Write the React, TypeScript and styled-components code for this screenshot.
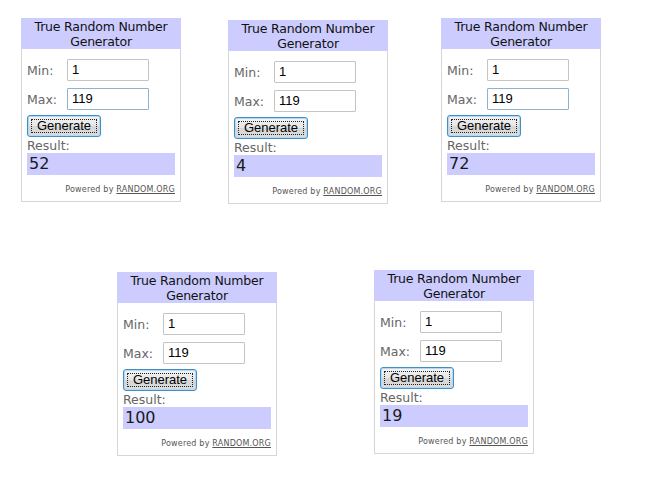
import React from "react";
import styled, { createGlobalStyle } from "styled-components";

const Global = createGlobalStyle`
  html, body { margin: 0; padding: 0; background: #ffffff; }
  body { width: 654px; height: 498px; overflow: hidden; font-family: "DejaVu Sans", Verdana, sans-serif; }
`;

const Page = styled.div`
  display: flex;
  flex-direction: column;
  padding: 18px 0 0 0;
`;

const Row = styled.div<{ $left: number; $top: number }>`
  display: flex;
  align-items: flex-start;
  padding-left: ${(p) => p.$left}px;
  margin-top: ${(p) => p.$top}px;
`;

const Widget = styled.div<{ $ml: number; $mt: number }>`
  box-sizing: border-box;
  width: 160px;
  height: 184px;
  margin-left: ${(p) => p.$ml}px;
  margin-top: ${(p) => p.$mt}px;
  border: 1px solid #d6d6d6;
  border-top: 0;
  display: flex;
  flex-direction: column;
  background: #fff;
`;

const Header = styled.div`
  margin: 0 -1px;
  height: 31px;
  background: #ccccff;
  color: #111;
  font-family: "DejaVu Sans", Verdana, sans-serif;
  font-size: 12.5px;
  line-height: 14.5px;
  text-align: center;
  padding-top: 2px;
  box-sizing: border-box;
  letter-spacing: -0.2px;
`;

const Body = styled.div`
  padding: 10px 0 0 5px;
  display: flex;
  flex-direction: column;
`;

const FieldRow = styled.div`
  display: flex;
  align-items: center;
  height: 22px;
  margin-bottom: 7px;
`;

const Label = styled.span`
  width: 40px;
  color: #666;
  font-size: 12.5px;
  font-family: "DejaVu Sans", Verdana, sans-serif;
`;

const Input = styled.div<{ $focus?: boolean }>`
  box-sizing: border-box;
  width: 82px;
  height: 22px;
  border: 1px solid ${(p) => (p.$focus ? "#8fb3cf" : "#c4c4c4")};
  border-radius: 1px;
  font-family: "Liberation Sans", Arial, sans-serif;
  font-size: 13px;
  line-height: 20px;
  padding-left: 4px;
  color: #000;
  background: #fff;
`;

const Button = styled.div`
  box-sizing: border-box;
  width: 74px;
  height: 22px;
  margin-top: -2px;
  border: 1px solid #3c8fc9;
  border-radius: 3px;
  background: linear-gradient(#f4f4f4, #e6e6e6 50%, #d6d6d6 51%, #dcdcdc);
  box-shadow: inset 0 0 0 1px #b7d8ef;
  font-family: "Liberation Sans", Arial, sans-serif;
  font-size: 13px;
  line-height: 20px;
  text-align: center;
  color: #000;
  position: relative;
  &::after {
    content: "";
    position: absolute;
    inset: 3px;
    border: 1px dotted #222;
  }
`;

const ResultLabel = styled.div`
  color: #666;
  font-size: 12.5px;
  margin-top: 2px;
  line-height: 14px;
`;

const ResultBox = styled.div`
  width: 148px;
  height: 22px;
  background: #ccccff;
  color: #1a1a1a;
  font-family: "DejaVu Sans", Verdana, sans-serif;
  font-size: 16px;
  line-height: 22px;
  padding-left: 2px;
  box-sizing: border-box;
`;

const Powered = styled.div`
  margin-top: 10px;
  width: 148px;
  text-align: right;
  font-size: 8px;
  color: #555;
  font-family: "DejaVu Sans", Verdana, sans-serif;
  letter-spacing: 0.2px;
  & u { color: #555; }
`;

type W = { result: string; ml: number; mt: number; focus?: boolean };

const Generator = ({ result, ml, mt, focus }: W) => (
  <Widget $ml={ml} $mt={mt}>
    <Header>
      True Random Number
      <br />
      Generator
    </Header>
    <Body>
      <FieldRow>
        <Label>Min:</Label>
        <Input>1</Input>
      </FieldRow>
      <FieldRow>
        <Label>Max:</Label>
        <Input $focus={focus}>119</Input>
      </FieldRow>
      <Button>Generate</Button>
      <ResultLabel>Result:</ResultLabel>
      <ResultBox>{result}</ResultBox>
      <Powered>
        Powered by <u>RANDOM.ORG</u>
      </Powered>
    </Body>
  </Widget>
);

export default function App() {
  return (
    <>
      <Global />
      <Page>
        <Row $left={21} $top={0}>
          <Generator result="52" ml={0} mt={0} focus />
          <Generator result="4" ml={47} mt={2} />
          <Generator result="72" ml={53} mt={0} focus />
        </Row>
        <Row $left={117} $top={66}>
          <Generator result="100" ml={0} mt={2} />
          <Generator result="19" ml={97} mt={0} />
        </Row>
      </Page>
    </>
  );
}
